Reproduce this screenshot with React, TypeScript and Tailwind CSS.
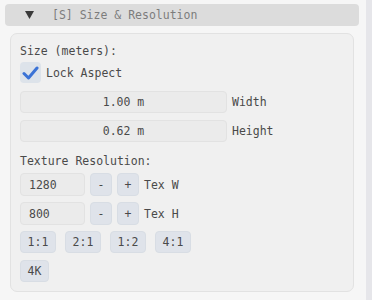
import { useState } from 'react';

const mono = "font-['DejaVu_Sans_Mono','Liberation_Mono',monospace]";

function SmallButton({ label, className = '' }: { label: string; className?: string }) {
  return (
    <button
      className={`h-[22px] flex items-center justify-center rounded-[4px] bg-[#dfe3ea] border border-[#d8dde4] text-[#4a4a4a] text-[11.5px] ${className}`}
    >
      {label}
    </button>
  );
}

function NumberRow({ value, label }: { value: string; label: string }) {
  return (
    <div className="flex items-center h-[23px]">
      <div className="w-[65px] h-full flex items-center pl-[8px] rounded-[4px] bg-[#ebebeb] border border-[#e2e2e2] text-[#4a4a4a]">
        {value}
      </div>
      <SmallButton label="-" className="ml-[5px] w-[22px] h-[23px]" />
      <SmallButton label="+" className="ml-[5px] w-[22px] h-[23px]" />
      <span className="ml-[5px] text-[#4a4a4a]">{label}</span>
    </div>
  );
}

function SizeRow({ value, label }: { value: string; label: string }) {
  return (
    <div className="flex items-center h-[22px]">
      <div className="w-[207px] h-full flex items-center justify-center rounded-[4px] bg-[#ebebeb] border border-[#e2e2e2] text-[#4a4a4a]">
        {value}
      </div>
      <span className="ml-[5px] text-[#4a4a4a]">{label}</span>
    </div>
  );
}

export default function App() {
  const [lockAspect, setLockAspect] = useState(true);

  return (
    <div className={`w-[372px] h-[300px] flex bg-[#f6f6f6] overflow-hidden text-[11.5px] leading-[16px] ${mono}`}>
      <div className="flex-1 pl-[5px] pt-[4px]">
        {/* collapsing header */}
        <div className="w-[354px] h-[22px] flex items-center rounded-[4px] bg-[#dcdcdc]">
          <svg width="9" height="8" viewBox="0 0 9 8" className="ml-[20px]">
            <polygon points="0,0 9,0 4.5,8" fill="#3a3a3a" />
          </svg>
          <span className="ml-[18px] text-[#7c7c7c]">[S] Size &amp; Resolution</span>
        </div>

        {/* group frame */}
        <div className="ml-[5px] mt-[7px] w-[344px] h-[259px] rounded-[7px] border border-[#e2e2e2] bg-[#f0f0f0] pl-[9px] pt-[9px]">
          <div className="text-[#4a4a4a]">Size (meters):</div>

          <label className="mt-[3px] flex items-center h-[21px] cursor-pointer" onClick={() => setLockAspect(!lockAspect)}>
            <span className="w-[21px] h-[21px] rounded-[4px] bg-[#dde3ea] flex items-center justify-center">
              {lockAspect && (
                <svg width="17" height="14" viewBox="0 0 17 14">
                  <polyline points="2,7.5 6.5,12 15,2" fill="none" stroke="#3b73d6" strokeWidth="3" strokeLinecap="round" strokeLinejoin="round" />
                </svg>
              )}
            </span>
            <span className="ml-[5px] text-[#4a4a4a]">Lock Aspect</span>
          </label>

          <div className="mt-[8px]">
            <SizeRow value="1.00 m" label="Width" />
          </div>
          <div className="mt-[7px]">
            <SizeRow value="0.62 m" label="Height" />
          </div>

          <div className="mt-[11px] text-[#4a4a4a]">Texture Resolution:</div>

          <div className="mt-[4px]">
            <NumberRow value="1280" label="Tex W" />
          </div>
          <div className="mt-[6px]">
            <NumberRow value="800" label="Tex H" />
          </div>

          <div className="mt-[6px] flex gap-[9px]">
            <SmallButton label="1:1" className="w-[36px]" />
            <SmallButton label="2:1" className="w-[36px]" />
            <SmallButton label="1:2" className="w-[36px]" />
            <SmallButton label="4:1" className="w-[36px]" />
          </div>
          <div className="mt-[7px] flex">
            <SmallButton label="4K" className="w-[29px]" />
          </div>
        </div>
      </div>

      {/* scrollbar track */}
      <div className="w-[6px] h-full bg-[#e6e6ea]" />
    </div>
  );
}
